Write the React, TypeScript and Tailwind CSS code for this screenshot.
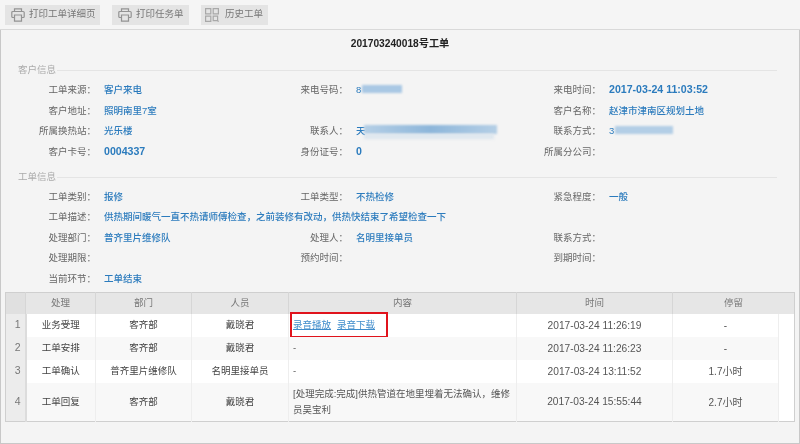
import React from "react";

function PrinterIcon() {
  return (
    <svg width="14" height="14" viewBox="0 0 14 14" fill="none" stroke="#939393" strokeWidth="1.200">
      <path d="M3.500 3.500V.8h7v2.700" />
      <path d="M3 9.500H1.800a1 1 0 0 1-1-1V4.500a1 1 0 0 1 1-1h10.400a1 1 0 0 1 1 1v4a1 1 0 0 1-1 1H11" />
      <path d="M3.500 7h7v6.200h-7z" />
    </svg>
  );
}

function HistoryIcon() {
  return (
    <svg width="14" height="14" viewBox="0 0 14 14" fill="none" stroke="#a8a8a8" strokeWidth="1.200">
      <path d="M.6.600h5.200v5.200H.6zM8.200.600h5.200v5.200H8.200zM.6 8.200h5.200v5.200H.6z" />
      <path d="M8.200 8.200h4.400v4.400H8.200z" />
      <path d="M12.400 12.400l1.200 1.200" />
    </svg>
  );
}

function Field({
  label,
  value,
  bold,
  children,
}: {
  label: string;
  value?: string;
  bold?: boolean;
  children?: React.ReactNode;
}) {
  return (
    <div className="flex h-[20.6px] items-center whitespace-nowrap">
      <span className="w-[91px] shrink-0 text-right text-[#666]">{label}：</span>
      <span className={`ml-[8px] text-[#2b7bbd] ${bold ? "text-[10.6px] font-bold" : "font-medium"}`}>
        {value}
        {children}
      </span>
    </div>
  );
}

function SectionTitle({ text }: { text: string }) {
  return (
    <div className="flex h-[14px] items-center pl-[13px] pr-[18px] text-[#aaa]">
      <span>{text}</span>
      <span className="ml-[1px] h-px flex-1 bg-[#e4e4e4]" />
    </div>
  );
}

const rows = [
  { no: 1, step: "业务受理", dept: "客齐部", user: "戴晓君", time: "2017-03-24 11:26:19", stay: "-", h: "h-[23px]" },
  { no: 2, step: "工单安排", dept: "客齐部", user: "戴晓君", content: "-", time: "2017-03-24 11:26:23", stay: "-", h: "h-[23px]" },
  { no: 3, step: "工单确认", dept: "普齐里片维修队", user: "名明里接单员", content: "-", time: "2017-03-24 13:11:52", stay: "1.7小时", h: "h-[23px]" },
  { no: 4, step: "工单回复", dept: "客齐部", user: "戴晓君", content: "[处理完成:完成]供热管道在地里埋着无法确认，维修员吴宝利", time: "2017-03-24 15:55:44", stay: "2.7小时", h: "h-[39px]" },
];

export default function App() {
  return (
    <div className="flex h-[444px] w-[800px] flex-col overflow-hidden bg-[#f4f4f4] font-['Liberation_Sans','Noto_Sans_CJK_SC',sans-serif] text-[9.5px] text-[#555] blur-[0.3px]">
      <div className="flex h-[30px] shrink-0 items-center gap-[12px] border-b border-[#d9d9d9] bg-[#f5f5f5] pl-[5px]">
        <button className="flex h-[20px] w-[95px] items-center gap-[4px] bg-[#e4e4e4] pl-[6px] text-[#777]">
          <PrinterIcon />
          打印工单详细页
        </button>
        <button className="flex h-[20px] w-[77px] items-center gap-[4px] bg-[#e4e4e4] pl-[6px] text-[#777]">
          <PrinterIcon />
          打印任务单
        </button>
        <button className="flex h-[20px] w-[67px] items-center gap-[6px] bg-[#e4e4e4] pl-[4px] text-[#777]">
          <HistoryIcon />
          历史工单
        </button>
      </div>

      <div className="flex min-h-0 flex-1 flex-col border-x border-b border-[#c8c8c8] pl-[4px] pr-[4px]">
        <div className="mt-[7px] flex h-[14px] items-center justify-center text-[10.2px] font-bold text-[#222]">
          201703240018号工单
        </div>

        <div className="mt-[12px]">
          <SectionTitle text="客户信息" />
          <div className="mt-[3px] grid grid-cols-[252px_253px_1fr]">
            <Field label="工单来源" value="客户来电" />
            <Field label="来电号码">
              <span className="relative inline-block">
                8
                <span className="absolute left-[6px] top-[2px] h-[8px] w-[40px] bg-[#a9c8e4] blur-[1px]" />
              </span>
            </Field>
            <Field label="来电时间" value="2017-03-24 11:03:52" bold />
            <Field label="客户地址" value="照明南里7室" />
            <div />
            <Field label="客户名称" value="赵津市津南区规划土地" />
            <Field label="所属换热站" value="光乐楼" />
            <Field label="联系人">
              <span className="relative inline-block">
                天
                <span className="absolute left-[8px] top-[1px] h-[9px] w-[133px] bg-gradient-to-r from-[#b5cfe6] via-[#8db6da] to-[#b5cfe6] blur-[1px]" />
                <span className="absolute left-[8px] top-[10px] h-[5px] w-[130px] bg-[#dde6ee] blur-[1.500px]" />
              </span>
            </Field>
            <Field label="联系方式">
              <span className="relative inline-block">
                3
                <span className="absolute left-[6px] top-[2px] h-[8px] w-[58px] bg-[#b3cee6] blur-[1px]" />
              </span>
            </Field>
            <Field label="客户卡号" value="0004337" bold />
            <Field label="身份证号" value="0" bold />
            <Field label="所属分公司" />
          </div>
        </div>

        <div className="mt-[8px]">
          <SectionTitle text="工单信息" />
          <div className="mt-[2px] grid grid-cols-[252px_253px_1fr]">
            <Field label="工单类别" value="报修" />
            <Field label="工单类型" value="不热检修" />
            <Field label="紧急程度" value="一般" />
            <div className="col-span-3">
              <Field label="工单描述" value="供热期间暖气一直不热请师傅检查，之前装修有改动，供热快结束了希望检查一下" />
            </div>
            <Field label="处理部门" value="普齐里片维修队" />
            <Field label="处理人" value="名明里接单员" />
            <Field label="联系方式" />
            <Field label="处理期限" />
            <Field label="预约时间" />
            <Field label="到期时间" />
            <Field label="当前环节" value="工单结束" />
          </div>
        </div>

        <table className="mt-[3px] w-[790px] table-fixed border border-[#cfcfcf] bg-white text-center">
          <colgroup>
            <col className="w-[20px]" />
            <col className="w-[70px]" />
            <col className="w-[96px]" />
            <col className="w-[97px]" />
            <col className="w-[228px]" />
            <col className="w-[156px]" />
            <col className="w-[106px]" />
            <col />
          </colgroup>
          <thead>
            <tr className="h-[21px] bg-[#e6e6e6] text-[#777]">
              <th className="border-r border-[#d6d6d6] bg-[#e0e0e0] font-normal" />
              <th className="border-r border-[#d6d6d6] font-normal">处理</th>
              <th className="border-r border-[#d6d6d6] font-normal">部门</th>
              <th className="border-r border-[#d6d6d6] font-normal">人员</th>
              <th className="border-r border-[#d6d6d6] font-normal">内容</th>
              <th className="border-r border-[#d6d6d6] font-normal">时间</th>
              <th colSpan={2} className="font-normal">停留</th>
            </tr>
          </thead>
          <tbody>
            {rows.map((r) => (
              <tr key={r.no} className={r.h}>
                <td className="border-r-2 border-[#dcdcdc] bg-[#ececec] pl-[5px] text-[10.5px] text-[#777]">{r.no}</td>
                <td className={`border-r border-[#eee] text-[#444] ${r.no % 2 === 0 ? "bg-[#f8f8f8]" : "bg-white"}`}>{r.step}</td>
                <td className={`border-r border-[#eee] text-[#444] ${r.no % 2 === 0 ? "bg-[#f8f8f8]" : "bg-white"}`}>{r.dept}</td>
                <td className={`border-r border-[#eee] text-[#444] ${r.no % 2 === 0 ? "bg-[#f8f8f8]" : "bg-white"}`}>{r.user}</td>
                <td className={`relative border-r border-[#eee] px-[4px] text-left leading-[16px] text-[#555] ${r.no % 2 === 0 ? "bg-[#f8f8f8]" : "bg-white"}`}>
                  {r.no === 1 ? (
                    <>
                      <a className="text-[#3f8ccb] underline">录音播放</a>
                      <a className="ml-[6px] text-[#3f8ccb] underline">录音下载</a>
                      <span className="absolute left-[1px] top-[-2px] h-[26px] w-[98px] border-2 border-[#e0131c]" />
                    </>
                  ) : (
                    r.content
                  )}
                </td>
                <td className={`border-r border-[#eee] text-[10.2px] text-[#555] ${r.no % 2 === 0 ? "bg-[#f8f8f8]" : "bg-white"}`}>{r.time}</td>
                <td className={`border-r border-[#eee] text-[10px] text-[#555] ${r.no % 2 === 0 ? "bg-[#f8f8f8]" : "bg-white"}`}>{r.stay}</td>
                <td className="bg-white" />
              </tr>
            ))}
          </tbody>
        </table>
      </div>
    </div>
  );
}
